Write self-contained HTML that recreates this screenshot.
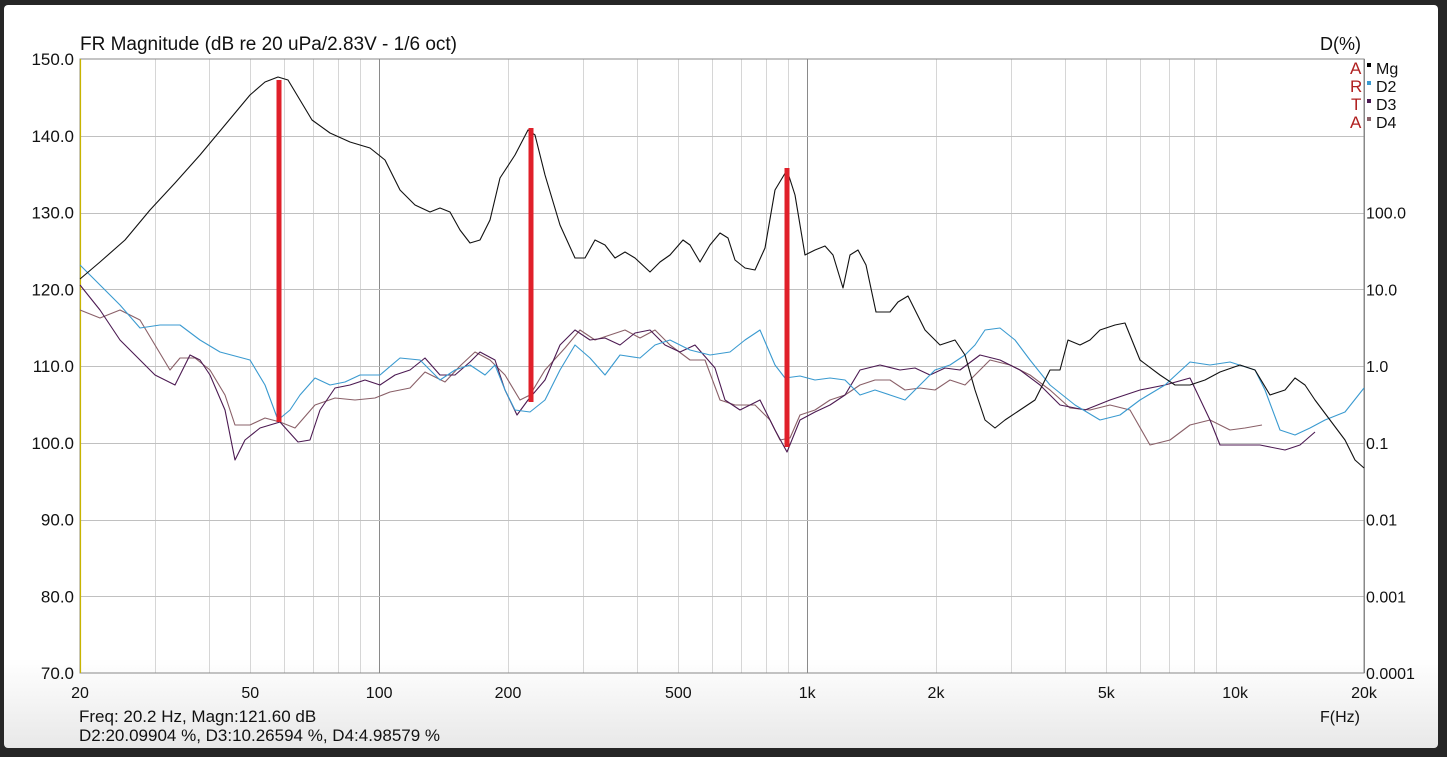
<!DOCTYPE html>
<html><head><meta charset="utf-8"><style>
body{margin:0;width:1447px;height:757px;background:#262626;overflow:hidden;font-family:"Liberation Sans",Arial,sans-serif}
#p{position:absolute;left:4px;top:5px;width:1434px;height:743px;border-radius:4px;background:linear-gradient(#fff 0,#fff 88%,#e8e8e8 100%)}
svg{position:absolute;left:0;top:0}
</style></head><body>
<div id="p"></div>
<svg id="s" width="1447" height="757" font-family="Liberation Sans, Arial, sans-serif" font-size="15" fill="#111">
<text x="80" y="50" font-size="19" textLength="377" lengthAdjust="spacingAndGlyphs">FR Magnitude (dB re 20 uPa/2.83V - 1/6 oct)</text>
<text x="1320" y="50" font-size="18">D(%)</text>
<g id="grid"></g>
<rect x="80" y="59" width="1284" height="614" fill="none" stroke="#888" stroke-width="1"/>
<line x1="80.5" y1="59" x2="80.5" y2="673" stroke="#c8b400" stroke-width="1.2"/>
<g fill="none" stroke-width="1.1" stroke-linejoin="round">
<polyline stroke="#8a6068" points="80,310 100,318 120,310 140,320 155,345 170,370 180,358 195,358 210,370 225,395 235,425 250,425 265,418 280,422 295,428 315,405 335,398 355,400 375,398 390,392 410,388 425,372 445,382 460,366 475,352 490,360 505,375 520,400 530,395 545,370 565,348 580,330 595,340 610,335 625,330 640,338 655,330 670,345 690,360 705,360 720,400 735,405 755,405 770,420 780,440 790,438 800,415 815,410 830,400 845,395 860,385 875,380 890,380 905,390 920,388 935,390 950,380 965,385 990,360 1010,365 1030,375 1050,390 1070,408 1090,410 1110,405 1130,410 1150,445 1170,440 1190,425 1210,420 1230,430 1245,428 1262,425"/>
<polyline stroke="#4c1a52" points="80,285 100,310 120,340 140,360 155,375 175,385 190,355 200,360 210,375 225,410 235,460 245,440 260,428 280,422 298,442 310,440 320,410 335,388 350,385 365,380 380,385 395,375 410,370 425,358 440,375 455,375 470,362 480,352 495,360 505,390 517,415 528,400 545,380 560,345 575,330 590,340 605,338 620,345 635,333 650,330 665,345 680,352 695,345 715,368 725,400 740,410 760,400 775,430 787,452 800,420 815,412 830,405 845,395 860,370 880,365 900,370 915,368 930,375 945,368 960,370 980,355 1000,360 1020,370 1040,385 1060,405 1085,410 1110,400 1140,390 1165,385 1190,378 1210,420 1220,445 1240,445 1260,445 1285,450 1300,445 1315,432"/>
<polyline stroke="#3a9ad0" points="80,265 100,285 120,305 140,328 160,325 180,325 200,340 220,352 250,360 265,385 278,420 290,410 300,395 315,378 330,385 345,382 360,375 380,375 400,358 420,360 440,380 455,370 470,365 485,375 495,365 505,390 515,410 530,412 545,400 560,370 575,345 590,358 605,375 620,355 640,358 655,345 670,340 690,350 710,355 730,352 745,340 760,330 775,365 785,378 800,376 815,380 830,378 845,380 860,395 875,390 890,395 905,400 920,385 935,370 950,365 965,355 975,345 985,330 1000,328 1015,340 1030,360 1050,385 1075,405 1100,420 1120,415 1140,400 1165,385 1190,362 1210,365 1230,362 1255,370 1265,390 1280,430 1295,435 1310,428 1325,420 1345,412 1364,388"/>
<polyline stroke="#111" points="80,279 100,262 125,240 150,210 175,183 200,155 225,125 250,95 265,82 278,77 288,80 300,100 312,120 330,133 350,142 370,148 385,160 400,190 415,205 430,212 440,208 450,212 460,230 470,243 480,240 490,220 500,178 515,155 528,130 535,135 545,175 560,225 575,258 585,258 595,240 605,245 615,258 625,252 635,258 650,272 660,262 670,255 683,240 690,245 700,262 710,245 720,233 728,238 735,260 745,268 755,270 765,248 775,190 787,170 795,195 805,255 815,250 825,246 833,255 843,288 850,255 858,250 866,265 876,312 890,312 898,302 908,296 915,310 925,330 940,345 955,340 965,355 975,390 985,420 995,428 1005,420 1020,410 1035,400 1050,370 1060,370 1068,340 1080,345 1090,340 1100,330 1115,325 1125,323 1140,360 1160,375 1175,385 1190,385 1205,380 1220,372 1240,365 1255,370 1270,395 1285,390 1295,378 1305,385 1315,400 1330,420 1345,440 1355,460 1364,468"/>
</g>
<g stroke="#e0202a" stroke-width="5"><line x1="279" y1="80" x2="279" y2="422"/><line x1="531" y1="128" x2="531" y2="402"/><line x1="787" y1="168" x2="787" y2="447"/></g>
<g id="lab"></g>
<g fill="#b02020" font-size="17"><text x="1350" y="74">A</text><text x="1350" y="92">R</text><text x="1351" y="110">T</text><text x="1350" y="128">A</text></g>
<rect x="1367" y="63" width="4" height="4" fill="#000"/><rect x="1367" y="81" width="4" height="4" fill="#3a9ad0"/><rect x="1367" y="99" width="4" height="4" fill="#4c1a52"/><rect x="1367" y="117" width="4" height="4" fill="#8a6068"/>
<g font-size="16"><text x="1376" y="74">Mg</text><text x="1376" y="92">D2</text><text x="1376" y="110">D3</text><text x="1376" y="128">D4</text></g>
<text x="1320" y="722" font-size="16">F(Hz)</text>
<text x="79" y="722" font-size="17">Freq: 20.2 Hz, Magn:121.60 dB</text>
<text x="79" y="741" font-size="17">D2:20.09904 %, D3:10.26594 %, D4:4.98579 %</text>
</svg>
<script>
var ns="http://www.w3.org/2000/svg",g=document.getElementById("grid"),lab=document.getElementById("lab");
function X(f){return 80+428*Math.log10(f/20);}
function add(p,t,a){var e=document.createElementNS(ns,t);for(var k in a)e.setAttribute(k,a[k]);p.appendChild(e);return e;}
[10,100,1000].forEach(function(d){for(var m=1;m<10;m++){var f=d*m;if(f<=20||f>=20000)continue;var x=Math.round(X(f))+.5;add(g,"line",{x1:x,x2:x,y1:59,y2:673,stroke:(m==1?"#8a8a8a":"#d6d6d6"),"stroke-width":1});}});
add(g,"line",{x1:1364.5,x2:1364.5,y1:59,y2:673,stroke:"#888"});
for(var i=1;i<8;i++){var y=Math.round(59+76.75*i)+.5;add(g,"line",{x1:80,x2:1364,y1:y,y2:y,stroke:"#c0c0c0","stroke-width":1});}
for(var i=0;i<=8;i++){var y=59+76.75*i+6;var t=add(lab,"text",{x:74,y:y,"text-anchor":"end","font-size":17});t.textContent=(150-10*i).toFixed(1);}
var rl=["100.0","10.0","1.0","0.1","0.01","0.001","0.0001"];
for(var i=0;i<rl.length;i++){var t=add(lab,"text",{x:1366,y:59+76.75*(i+2)+6,"font-size":16});t.textContent=rl[i];}
[[20,"20"],[50,"50"],[100,"100"],[200,"200"],[500,"500"],[1000,"1k"],[2000,"2k"],[5000,"5k"],[10000,"10k"],[20000,"20k"]].forEach(function(a){var t=add(lab,"text",{x:X(a[0]),y:698,"text-anchor":"middle","font-size":16});t.textContent=a[1];});
</script>
</body></html>
